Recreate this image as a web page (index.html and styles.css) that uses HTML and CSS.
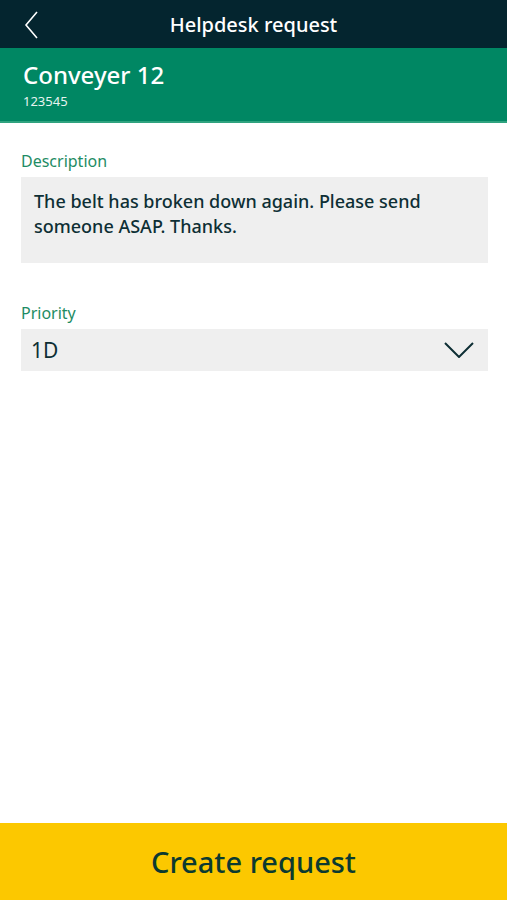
FILE: index.html
```html
<!DOCTYPE html>
<html lang="en">
<head>
    <meta charset="UTF-8">
    <meta name="viewport" content="width=device-width, initial-scale=1.0">
    <title>Helpdesk request</title>
    <link rel="stylesheet" href="styles.css">
</head>
<body>
    <div class="app">
        <div class="topbar">
            <span class="back">
                <svg width="16" height="28" viewBox="0 0 16 28"><path d="M13 1 L2 14 L13 27" fill="none" stroke="#fff" stroke-width="1.6"/></svg>
            </span>
            <h1>Helpdesk request</h1>
        </div>
        <div class="asset">
            <div class="asset-name">Conveyer 12</div>
            <div class="asset-id">123545</div>
        </div>

        <div class="form">
            <div class="field">
                <label>Description</label>
                <div class="textarea">The belt has broken down again. Please send someone ASAP. Thanks.</div>
            </div>
            <div class="field">
                <label>Priority</label>
                <div class="select">
                    <span>1D</span>
                    <svg width="30" height="16" viewBox="0 0 30 16"><path d="M1 1 L15 15 L29 1" fill="none" stroke="#0e2f35" stroke-width="2"/></svg>
                </div>
            </div>
        </div>

        <button class="create-btn">Create request</button>
    </div>
</body>
</html>
```
FILE: styles.css
```css
body {
    font-family: "Noto Sans", sans-serif;
    margin: 0;
    padding: 0;
    background-color: #fff;
    color: #0e2f35;
}

.app {
    display: flex;
    flex-direction: column;
    height: 900px;
}

.topbar {
    background-color: #04252f;
    height: 48px;
    display: flex;
    align-items: center;
    justify-content: center;
    position: relative;
}
.topbar h1 {
    margin: 0;
    color: #fff;
    font-size: 20px;
    font-weight: 500;
}
.back {
    position: absolute;
    left: 24px;
    top: 11px;
}

.asset {
    background-color: #008763;
    color: #fff;
    padding: 10px 23px 10px;
    border-bottom: 2px solid #2fa37f;
}
.asset-name { font-size: 24px; font-weight: 500; line-height: 33px; }
.asset-id { font-size: 13px; line-height: 20px; opacity: 0.9; }

.form {
    flex: 1;
    padding: 28px 19px 0 21px;
}
.field { margin-bottom: 40px; }
.field label {
    display: block;
    color: #1e8c64;
    font-size: 16px;
    line-height: 20px;
    margin-bottom: 6px;
}
.textarea {
    background-color: #efefef;
    padding: 12px 13px 0;
    height: 74px;
    font-size: 18px;
    font-weight: 500;
    line-height: 25px;
}
.select {
    background-color: #efefef;
    height: 42px;
    display: flex;
    align-items: center;
    justify-content: space-between;
    padding: 0 14px 0 10px;
    font-size: 21px;
}

.create-btn {
    background-color: #fcc800;
    border: none;
    height: 77px;
    width: 100%;
    font-family: inherit;
    font-size: 29px;
    font-weight: 500;
    color: #0b3a30;
}
```
